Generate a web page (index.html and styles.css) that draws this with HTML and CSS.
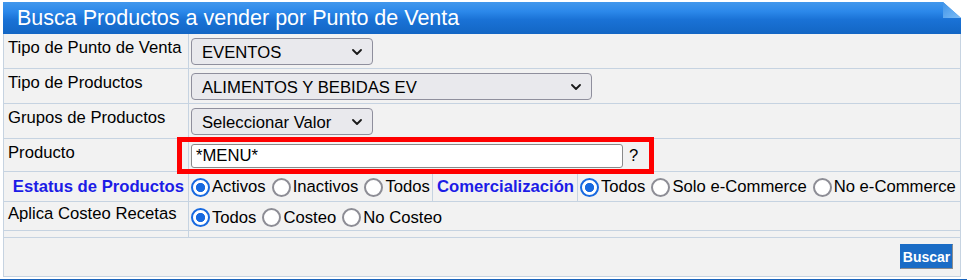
FILE: index.html
```html
<!DOCTYPE html>
<html lang="es">
<head>
<meta charset="utf-8">
<title>Busca Productos a vender por Punto de Venta</title>
<link rel="stylesheet" href="styles.css">
</head>
<body>
<div class="panel">
  <div class="panel-header">
    <h1 class="panel-title">Busca Productos a vender por Punto de Venta</h1>
    <svg class="corner" width="18" height="16" viewBox="0 0 18 16" aria-hidden="true">
      <defs>
        <linearGradient id="fold" x1="0" y1="0" x2="1" y2="1">
          <stop offset="0" stop-color="#3f93e8"/>
          <stop offset="1" stop-color="#7dbdf6"/>
        </linearGradient>
      </defs>
      <polygon points="0,0 18,0 18,16" fill="#ffffff"/>
      <polygon points="0,0 0,16 18,16" fill="url(#fold)"/>
    </svg>
  </div>
  <table class="form-table">
    <colgroup>
      <col class="c1"><col class="c2"><col class="c3"><col class="c4">
    </colgroup>
    <tr class="row-select">
      <td class="label">Tipo de Punto de Venta</td>
      <td class="field" colspan="3">
        <div class="select select-short"><span>EVENTOS</span><svg class="chev" width="10" height="6" viewBox="0 0 10 6"><polyline points="1,1 5,5 9,1"/></svg></div>
      </td>
    </tr>
    <tr class="row-select">
      <td class="label">Tipo de Productos</td>
      <td class="field" colspan="3">
        <div class="select select-long"><span>ALIMENTOS Y BEBIDAS EV</span><svg class="chev" width="10" height="6" viewBox="0 0 10 6"><polyline points="1,1 5,5 9,1"/></svg></div>
      </td>
    </tr>
    <tr class="row-select">
      <td class="label">Grupos de Productos</td>
      <td class="field" colspan="3">
        <div class="select select-short"><span>Seleccionar Valor</span><svg class="chev" width="10" height="6" viewBox="0 0 10 6"><polyline points="1,1 5,5 9,1"/></svg></div>
      </td>
    </tr>
    <tr class="row-input">
      <td class="label">Producto</td>
      <td class="field" colspan="3">
        <div class="product-field">
          <input class="text-input" type="text" value="*MENU*">
          <span class="help">?</span>
          <div class="highlight"></div>
        </div>
      </td>
    </tr>
    <tr class="row-radio">
      <td class="label-strong">Estatus de Productos</td>
      <td class="radio-cell">
        <div class="radios">
          <label class="opt"><input class="radio" type="radio" name="estatus" checked>Activos</label>
          <label class="opt"><input class="radio" type="radio" name="estatus">Inactivos</label>
          <label class="opt"><input class="radio" type="radio" name="estatus">Todos</label>
        </div>
      </td>
      <td class="label-strong">Comercialización</td>
      <td class="radio-cell">
        <div class="radios">
          <label class="opt"><input class="radio" type="radio" name="comercial" checked>Todos</label>
          <label class="opt"><input class="radio" type="radio" name="comercial">Solo e-Commerce</label>
          <label class="opt"><input class="radio" type="radio" name="comercial">No e-Commerce</label>
        </div>
      </td>
    </tr>
    <tr class="row-radio2">
      <td class="label label-tight">Aplica Costeo Recetas</td>
      <td class="radio-cell" colspan="3">
        <div class="radios radios-short">
          <label class="opt"><input class="radio" type="radio" name="costeo" checked>Todos</label>
          <label class="opt"><input class="radio" type="radio" name="costeo">Costeo</label>
          <label class="opt"><input class="radio" type="radio" name="costeo">No Costeo</label>
        </div>
      </td>
    </tr>
    <tr class="row-spacer">
      <td></td>
      <td colspan="3"></td>
    </tr>
  </table>
  <div class="panel-footer">
    <button class="btn" type="button">Buscar</button>
  </div>
</div>
<div class="next-bar"></div>
</body>
</html>
```

FILE: styles.css
```css
* {
  box-sizing: border-box;
}

html,
body {
  margin: 0;
  padding: 0;
  background: #ffffff;
}

body {
  font-family: "Liberation Sans", Arial, sans-serif;
  font-size: 16.67px;
  color: #000;
}

.panel {
  width: 958px;
  margin: 2px 0 0 3px;
}

.panel-header {
  position: relative;
  height: 32px;
  padding-left: 14px;
  background: linear-gradient(to bottom, #4197ec 0%, #2b88ea 30%, #1a72d6 55%, #1366c4 100%);
}

.panel-title {
  margin: 0;
  padding-top: 2px;
  font-size: 21.5px;
  font-weight: normal;
  line-height: 29px;
  color: #ffffff;
  white-space: nowrap;
}

.corner {
  position: absolute;
  top: 0;
  right: 0;
  display: block;
}

.form-table {
  width: 100%;
  border-collapse: collapse;
  table-layout: fixed;
  background: #f2f2f2;
}

.c1 { width: 185px; }
.c2 { width: 244px; }
.c3 { width: 145px; }

.form-table td {
  border: 1px solid #c6d3e1;
  padding: 4px 4px 3px 2px;
  vertical-align: top;
  white-space: nowrap;
}

.form-table tr:first-child td {
  border-top-style: hidden;
}

.form-table td.label {
  padding-left: 4px;
  line-height: 19px;
}

.form-table td.label-tight {
  padding-top: 2px;
}

.form-table td.label-strong {
  padding: 0 4px;
  text-align: right;
  vertical-align: middle;
  font-weight: bold;
  color: #1c1ce6;
}

.form-table td.radio-cell {
  padding: 0 2px;
  vertical-align: middle;
}

.form-table .row-spacer td {
  height: 7px;
  padding: 0;
}

.select {
  display: flex;
  align-items: center;
  justify-content: space-between;
  height: 27px;
  padding: 2px 10px 0 10px;
  border: 1px solid #8f8f9d;
  border-radius: 4px;
  background: #e9e9ed;
  color: #000;
}

.select-short { width: 182px; }
.select-long { width: 401px; }

.chev {
  display: block;
  flex: none;
  margin-top: -2px;
}

.chev polyline {
  fill: none;
  stroke: #1a1a1a;
  stroke-width: 1.8;
  stroke-linecap: round;
  stroke-linejoin: round;
}

.product-field {
  position: relative;
  display: flex;
  align-items: center;
  padding-top: 1px;
}

.text-input {
  width: 432px;
  height: 24px;
  margin: 0;
  padding: 0 4px;
  border: 1px solid #8a8a8a;
  border-radius: 3px;
  background: #ffffff;
  font: inherit;
  color: #000;
}

.help {
  margin-left: 6px;
}

.highlight {
  position: absolute;
  left: -14px;
  top: -6px;
  width: 477px;
  height: 37px;
  border: 5px solid #ff0000;
  pointer-events: none;
}

.radios {
  display: flex;
  align-items: center;
  gap: 6px;
  height: 29px;
  padding-top: 1px;
}

.radios-short {
  height: 28px;
  padding-top: 3px;
}

.opt {
  display: inline-flex;
  align-items: center;
  white-space: nowrap;
}

.radio {
  appearance: none;
  -webkit-appearance: none;
  flex: none;
  width: 19px;
  height: 19px;
  margin: 0 2px 0 0;
  border: 2px solid #8d8d95;
  border-radius: 50%;
  background: #ffffff;
}

.radio:checked {
  border: 2.5px solid #1769e0;
  background: radial-gradient(circle, #1769e0 0 4.3px, #ffffff 4.9px);
}

.panel-footer {
  display: flex;
  justify-content: flex-end;
  height: 39px;
  padding: 6px 7px 0 0;
  border: 1px solid #c6d3e1;
  border-top: none;
  background: #f2f2f2;
}

.btn {
  width: 53px;
  height: 25px;
  margin: 0;
  padding: 0;
  border: 1px solid;
  border-color: #1a6cc6 #8c8c8c #8c8c8c #1a6cc6;
  background: #1a6cc6;
  color: #ffffff;
  font-family: "Liberation Sans", Arial, sans-serif;
  font-size: 14px;
  font-weight: bold;
}

.next-bar {
  height: 10px;
  margin-top: 2px;
  background: #1b64bb;
}
```
